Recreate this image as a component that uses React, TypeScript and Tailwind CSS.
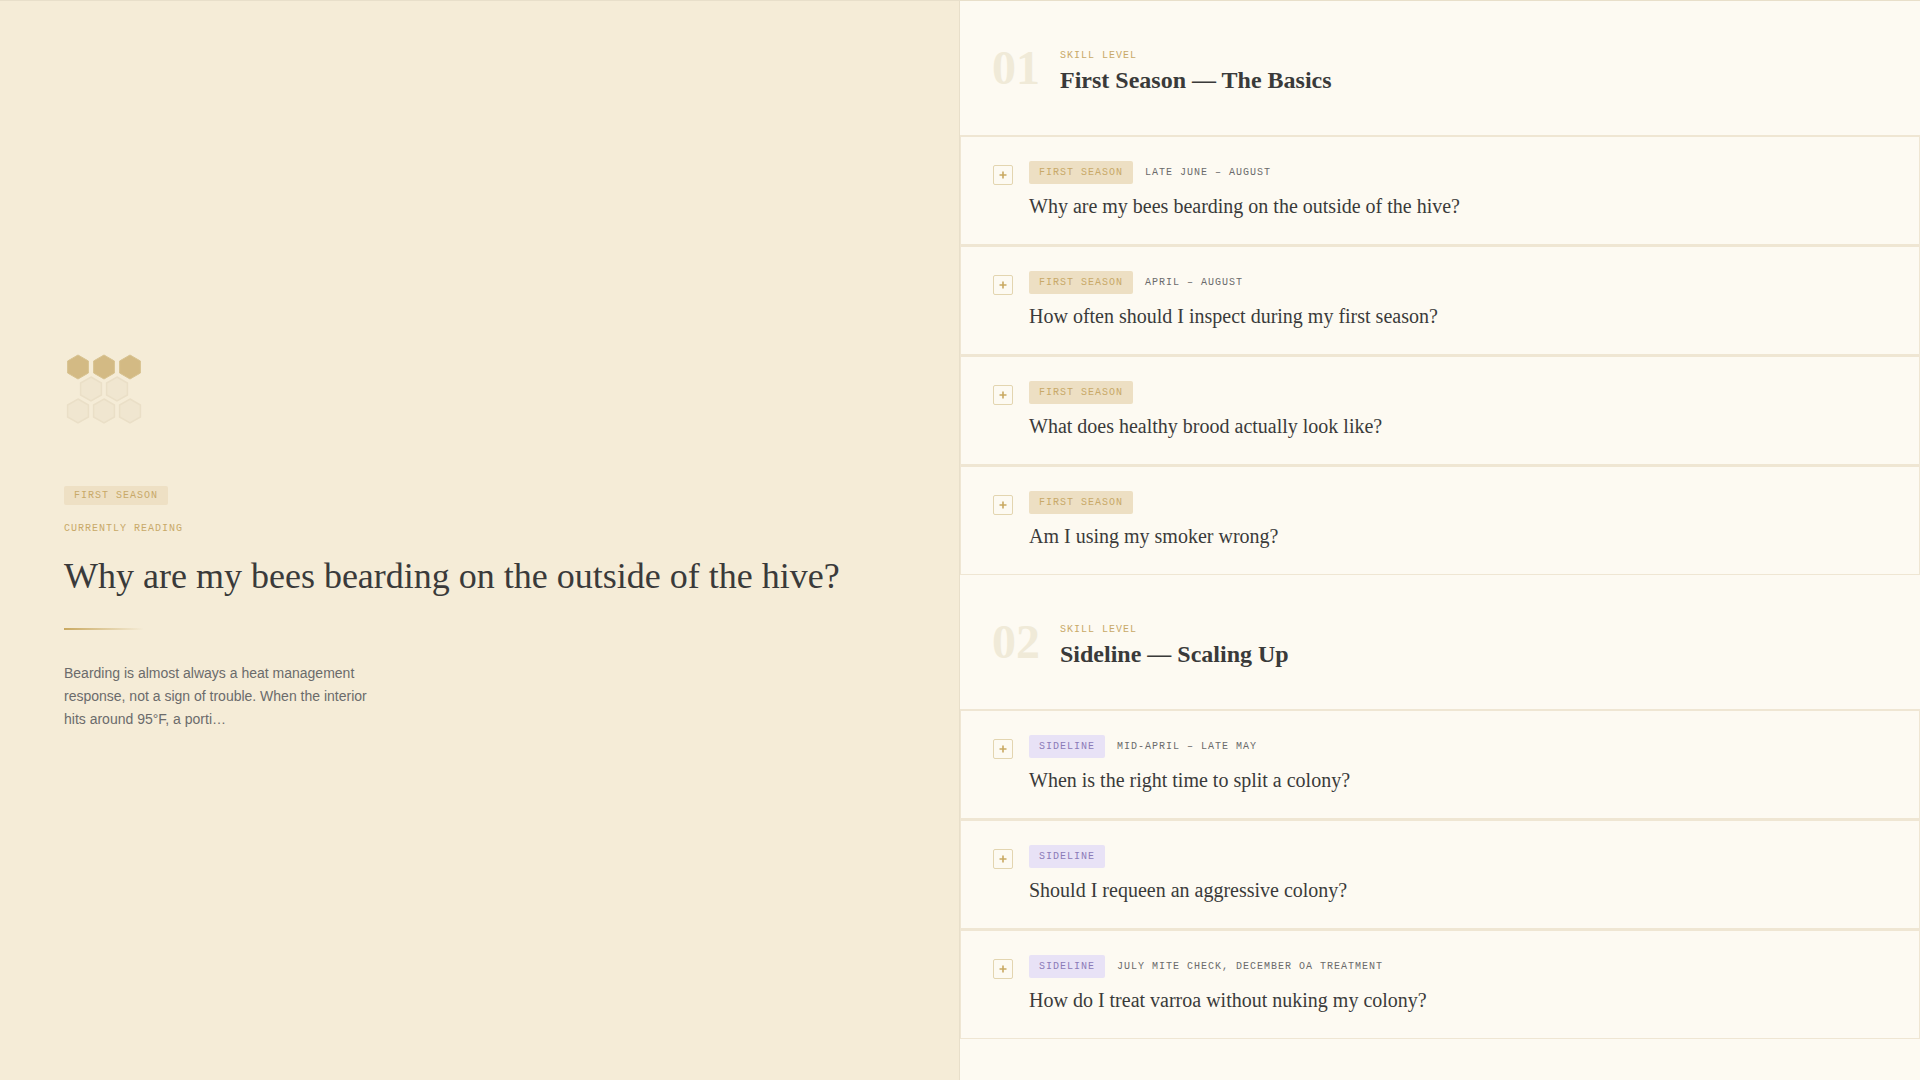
type Level = "FIRST SEASON" | "SIDELINE";

interface Question {
  text: string;
  level: Level;
  season?: string;
}

interface Section {
  number: string;
  title: string;
  questions: Question[];
}

const sections: Section[] = [
  {
    number: "01",
    title: "First Season — The Basics",
    questions: [
      {
        text: "Why are my bees bearding on the outside of the hive?",
        level: "FIRST SEASON",
        season: "LATE JUNE – AUGUST",
      },
      {
        text: "How often should I inspect during my first season?",
        level: "FIRST SEASON",
        season: "APRIL – AUGUST",
      },
      { text: "What does healthy brood actually look like?", level: "FIRST SEASON" },
      { text: "Am I using my smoker wrong?", level: "FIRST SEASON" },
    ],
  },
  {
    number: "02",
    title: "Sideline — Scaling Up",
    questions: [
      {
        text: "When is the right time to split a colony?",
        level: "SIDELINE",
        season: "MID-APRIL – LATE MAY",
      },
      { text: "Should I requeen an aggressive colony?", level: "SIDELINE" },
      {
        text: "How do I treat varroa without nuking my colony?",
        level: "SIDELINE",
        season: "JULY MITE CHECK, DECEMBER OA TREATMENT",
      },
    ],
  },
];

const badgeColors: Record<Level, string> = {
  "FIRST SEASON": "bg-[#eddfc3] text-[#c8a968]",
  SIDELINE: "bg-[#e8e2f6] text-[#8b7bb8]",
};

const cells = [
  { x: 14, y: 17, filled: true },
  { x: 40, y: 17, filled: true },
  { x: 66, y: 17, filled: true },
  { x: 27, y: 39, filled: false },
  { x: 53, y: 39, filled: false },
  { x: 14, y: 61, filled: false },
  { x: 40, y: 61, filled: false },
  { x: 66, y: 61, filled: false },
];

const mono = "font-['Liberation_Mono',monospace] text-[10px] tracking-[1px]";
const serif = "font-['Liberation_Serif',serif]";

function Honeycomb() {
  return (
    <svg viewBox="0 0 80 88" className="w-20 h-22 mb-12" aria-hidden="true">
      {cells.map((c) => (
        <polygon
          key={`${c.x}-${c.y}`}
          points="0,-12 10.4,-6 10.4,6 0,12 -10.4,6 -10.4,-6"
          transform={`translate(${c.x} ${c.y})`}
          fill={c.filled ? "#d3ba84" : "#f0e6d0"}
          stroke={c.filled ? "#d8c391" : "#eadfc7"}
          strokeWidth={c.filled ? 1 : 1.5}
        />
      ))}
    </svg>
  );
}

function ReadingPanel() {
  return (
    <aside className="flex flex-col items-start justify-center px-16 bg-[#f5ecd7] border-r border-[#e8dfca]">
      <Honeycomb />
      <span className={`${mono} leading-[11px] px-2.5 py-1 mb-4 rounded-xs bg-[#eee0c4] text-[#c8a968]`}>
        FIRST SEASON
      </span>
      <p className={`${mono} leading-[15px] mb-5 text-[#c8a968]`}>CURRENTLY READING</p>
      <h1 className={`${serif} text-4xl leading-10 mb-8 text-[#3a3a3a]`}>
        Why are my bees bearding on the outside of the hive?
      </h1>
      <div className="w-20 h-0.5 mb-8 bg-linear-to-r from-[#c9a961] to-transparent" />
      <p className="max-w-80 text-sm leading-[23px] text-[#6b6b6b]">
        Bearding is almost always a heat management response, not a sign of trouble. When the interior hits around
        95°F, a porti…
      </p>
    </aside>
  );
}

function QuestionRow({ question }: { question: Question }) {
  return (
    <li>
      <button
        type="button"
        aria-expanded="false"
        className="flex items-start gap-4 w-full px-8 py-6 text-left bg-[#fdfaf2] border border-[#efe6d3]"
      >
        <span className="flex items-center justify-center size-5 mt-1 shrink-0 rounded-xs border border-[#e3d5b0]">
          <svg viewBox="0 0 8 8" className="size-2" aria-hidden="true">
            <path d="M4 0.5v7M0.5 4h7" stroke="#c9a961" strokeWidth="1.6" />
          </svg>
        </span>
        <span className="flex flex-col gap-2">
          <span className="flex items-center gap-3">
            <span className={`${mono} leading-[15px] px-2.5 py-1 rounded-xs ${badgeColors[question.level]}`}>
              {question.level}
            </span>
            {question.season && (
              <span className={`${mono} leading-[15px] text-[#6b6b6b]`}>{question.season}</span>
            )}
          </span>
          <span className={`${serif} text-xl leading-7 text-[#3a3a3a]`}>{question.text}</span>
        </span>
      </button>
    </li>
  );
}

function SectionBlock({ section }: { section: Section }) {
  return (
    <section>
      <header className="flex items-start gap-5 px-8 pt-12 pb-[41px] border-b border-[#efe6d3]">
        <span className={`${serif} text-5xl leading-[38px] font-bold text-[#f0ead8]`}>{section.number}</span>
        <div>
          <p className={`${mono} leading-[13px] mb-1 text-[#c8a968]`}>SKILL LEVEL</p>
          <h2 className={`${serif} text-2xl leading-7 font-bold text-[#3a3a3a]`}>{section.title}</h2>
        </div>
      </header>
      <ul className="flex flex-col gap-px bg-[#efe6d3]">
        {section.questions.map((q) => (
          <QuestionRow key={q.text} question={q} />
        ))}
      </ul>
    </section>
  );
}

export default function App() {
  return (
    <main className="grid grid-cols-2 min-h-screen border-t border-[#e8dfca] bg-[#fdfaf2] font-['Liberation_Sans',sans-serif]">
      <ReadingPanel />
      <div>
        {sections.map((s) => (
          <SectionBlock key={s.number} section={s} />
        ))}
      </div>
    </main>
  );
}
